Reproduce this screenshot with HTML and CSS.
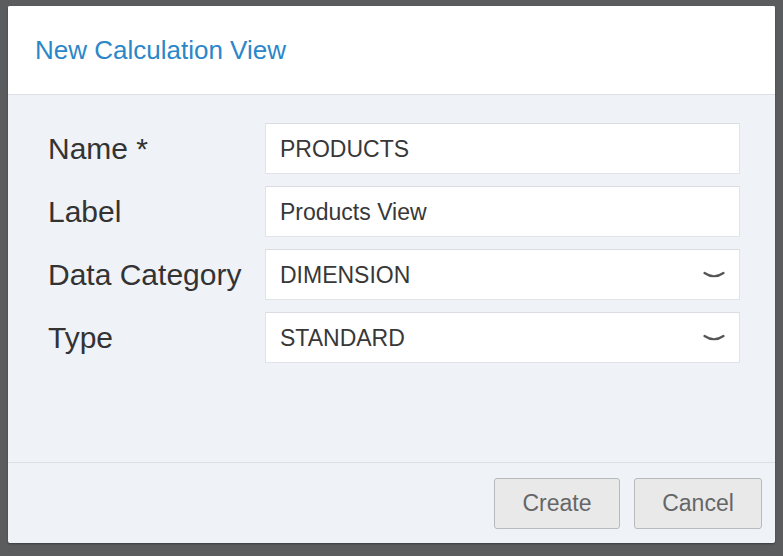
FILE: index.html
```html
<!DOCTYPE html>
<html>
<head>
<meta charset="utf-8">
<link rel="stylesheet" href="styles.css">
</head>
<body>
<div class="dialog">
  <div class="header">
    <h1 class="title">New Calculation View</h1>
  </div>
  <div class="content">
    <div class="form">
      <div class="label">Name *</div>
      <div class="field">PRODUCTS</div>
      <div class="label">Label</div>
      <div class="field">Products View</div>
      <div class="label">Data Category</div>
      <div class="field select">DIMENSION
        <svg class="chev" width="22" height="9" viewBox="0 0 22 9"><path d="M1.5 2 Q11 8.5 20.5 2" fill="none" stroke="#555" stroke-width="2.2" stroke-linecap="round"/></svg>
      </div>
      <div class="label">Type</div>
      <div class="field select">STANDARD
        <svg class="chev" width="22" height="9" viewBox="0 0 22 9"><path d="M1.5 2 Q11 8.5 20.5 2" fill="none" stroke="#555" stroke-width="2.2" stroke-linecap="round"/></svg>
      </div>
    </div>
  </div>
  <div class="footer">
    <button class="btn">Create</button>
    <button class="btn">Cancel</button>
  </div>
</div>
</body>
</html>
```
FILE: styles.css
```css
html, body {
  margin: 0;
  padding: 0;
  height: 100%;
}
body {
  background: #5b5c5e;
  font-family: "Liberation Sans", Arial, sans-serif;
  padding: 6px 8px 13px 8px;
  box-sizing: border-box;
  width: 783px;
  height: 556px;
}
.dialog {
  height: 537px;
  background: #eff2f7;
  border-radius: 2px;
  display: flex;
  flex-direction: column;
  box-shadow: 0 1px 2px rgba(0,0,0,0.35);
  overflow: hidden;
}
.header {
  background: #ffffff;
  height: 88px;
  border-bottom: 1px solid #dcdfe4;
  display: flex;
  align-items: center;
  padding-left: 27px;
  flex: none;
}
.title {
  margin: 0;
  font-weight: normal;
  font-size: 26px;
  color: #2b87c8;
  padding-top: 0px;
}
.content {
  flex: 1;
  padding: 28px 35px 0 40px;
  border-bottom: 1px solid #dcdfe4;
}
.form {
  display: grid;
  grid-template-columns: 217px 1fr;
  grid-auto-rows: 51px;
  row-gap: 12px;
}
.label {
  display: flex;
  align-items: center;
  font-size: 30px;
  color: #333333;
}
.field {
  background: #ffffff;
  border: 1px solid #e0e3e8;
  border-top-color: #d9dce1;
  display: flex;
  align-items: center;
  padding: 2px 0 0 14px;
  font-size: 23px;
  color: #383838;
  position: relative;
}
.select .chev {
  position: absolute;
  right: 14px;
  top: 21px;
}
.footer {
  height: 80px;
  flex: none;
  display: flex;
  justify-content: flex-end;
  align-items: flex-start;
  padding: 15px 13px 0 0;
  box-sizing: border-box;
  gap: 14px;
}
.btn {
  height: 51px;
  background: #e9e9ea;
  border: 1px solid #b9babc;
  border-radius: 3px;
  font-family: "Liberation Sans", Arial, sans-serif;
  font-size: 23px;
  color: #666666;
  padding: 0;
}
.btn:first-child {
  width: 126px;
}
.btn:last-child {
  width: 128px;
}
```
